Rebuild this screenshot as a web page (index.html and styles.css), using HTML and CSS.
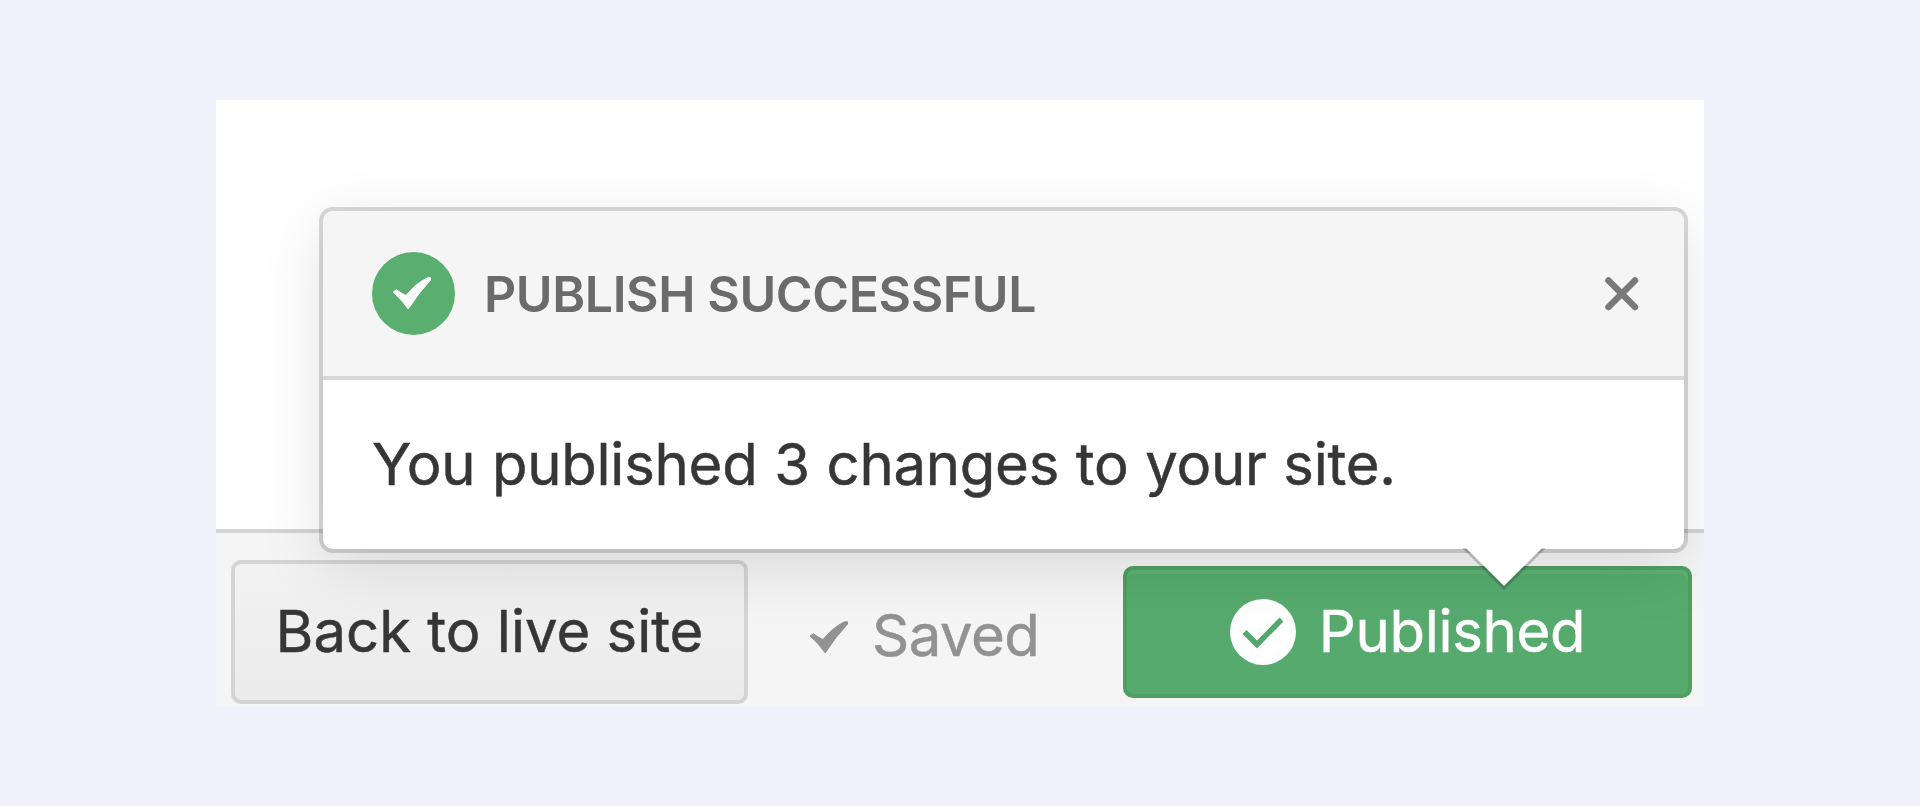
FILE: index.html
```html
<!DOCTYPE html>
<html lang="en">
<head>
    <meta charset="UTF-8">
    <title>Publish successful</title>
    <link rel="stylesheet" href="styles.css">
</head>
<body>
    <div class="panel">
        <div class="canvas"></div>

        <div class="footer">
            <button class="btn btn-back"><span class="back-text">Back to live site</span></button>
            <div class="saved">
                <svg class="saved-icon" viewBox="0 0 38 33">
                    <path d="M0.5 14.5 L3.5 12.8 Q8.5 16.5 13 18.6 Q22 7 34.5 0.8 L37.5 0.8 L37.5 3 Q25 16.5 15.2 32 Q8.5 22 0.5 15.5Z"/>
                </svg>
                <span class="saved-text">Saved</span>
            </div>
            <button class="btn btn-published">
                <svg class="published-icon" viewBox="0 0 66 66">
                    <circle cx="33" cy="33" r="33" fill="#fff"/>
                    <path d="M14.5 33 L27 45.5 L51.5 20.5" fill="none" stroke="#55a86b" stroke-width="5.5"/>
                </svg>
                <span class="published-text">Published</span>
            </button>
        </div>

        <div class="popover">
            <div class="popover-header">
                <svg class="success-icon" viewBox="0 0 83 83">
                    <circle cx="41.5" cy="41.5" r="41.5" fill="#5aae70"/>
                    <path class="success-check" transform="translate(21 25)" d="M0.5 14.5 L3.5 12.8 Q8.5 16.5 13 18.6 Q22 7 34.5 0.8 L37.5 0.8 L37.5 3 Q25 16.5 15.2 32 Q8.5 22 0.5 15.5Z"/>
                </svg>
                <span class="popover-title">PUBLISH SUCCESSFUL</span>
                <svg class="close-icon" viewBox="0 0 34 34">
                    <path d="M3.5 3.5 L30 30 M30 3.5 L3.5 30"/>
                </svg>
            </div>
            <div class="popover-body"><span class="message">You published 3 changes to your site.</span></div>
            <svg class="popover-arrow" viewBox="0 0 84 44">
                <path d="M0 0 L42 42 L84 0Z" fill="#000" fill-opacity="0.2"/>
                <path d="M4 0 L42 38 L80 0Z" fill="#fff"/>
            </svg>
        </div>
    </div>
</body>
</html>
```

FILE: styles.css
```css
body {
    margin: 0;
    padding: 100px 216px 0;
    background: #f0f1fa;
    font-family: 'Inter', sans-serif;
}

.panel {
    position: relative;
    display: flex;
    flex-direction: column;
    height: 606px;
    overflow: hidden;
    background: #fff;
}

.canvas {
    flex: 1;
}

.footer {
    display: flex;
    align-items: flex-start;
    box-sizing: border-box;
    height: 177px;
    padding: 27px 12px 0 15px;
    border-top: 4px solid #d4d4d4;
    background: #f5f5f5;
}

.btn {
    display: flex;
    align-items: center;
    justify-content: center;
    box-sizing: border-box;
    padding: 0 0 2px;
    border-radius: 10px;
    font-family: inherit;
    font-size: 58px;
    line-height: 70px;
    white-space: nowrap;
    -webkit-text-stroke: 0.5px;
}

.btn-back {
    width: 517px;
    height: 144px;
    border: 4px solid #d4d4d4;
    background: linear-gradient(to bottom, #f2f2f2, #ebebeb);
    color: #363636;
}

.saved {
    display: flex;
    align-items: center;
    width: 313px;
    margin: 40px 0 0 62px;
    color: #929292;
    font-size: 58px;
    letter-spacing: -0.5px;
    line-height: 70px;
    -webkit-text-stroke: 0.5px;
}

.saved-icon {
    width: 38px;
    height: 33px;
    margin: 4px 24px 0 0;
    fill: #929292;
    stroke: #929292;
    stroke-linejoin: round;
}

.btn-published {
    width: 569px;
    height: 132px;
    margin-top: 6px;
    border: 4px solid #4f9f64;
    background: #57aa6d;
    box-shadow: inset 0 4px 0 #5db173;
    color: #fff;
    letter-spacing: -0.3px;
}

.published-icon {
    width: 66px;
    height: 66px;
    margin: 2px 23px 0 0;
}

/* sits over the canvas and the footer */
.popover {
    position: absolute;
    top: 111px;
    left: 107px;
    width: 1361px;
    height: 338px;
    border-radius: 10px;
    background: #fff;
    box-shadow: 0 0 0 4px rgba(0, 0, 0, 0.15), 0 16px 66px rgba(0, 0, 0, 0.12);
}

.popover-header {
    display: flex;
    align-items: center;
    box-sizing: border-box;
    height: 169px;
    padding: 0 45px 0 49px;
    border-bottom: 4px solid #d8d8d8;
    border-radius: 10px 10px 0 0;
    background: #f5f5f5;
}

.success-icon {
    width: 83px;
    height: 83px;
    margin-right: 29px;
}

.success-check {
    fill: #fff;
    stroke: #fff;
    stroke-linejoin: round;
}

.popover-title {
    color: #6b6b6b;
    font-size: 50px;
    font-weight: 600;
    letter-spacing: -0.4px;
}

.close-icon {
    width: 34px;
    height: 34px;
    margin-left: auto;
    fill: none;
    stroke: #797979;
    stroke-linecap: round;
    stroke-width: 6.5;
}

.popover-body {
    padding: 49px 49px 0;
    color: #363636;
    font-size: 58px;
    letter-spacing: -0.25px;
    word-spacing: 0.7px;
    line-height: 70px;
    white-space: nowrap;
    -webkit-text-stroke: 0.5px;
}

.popover-arrow {
    position: absolute;
    top: 337px;
    left: 1139px;
    width: 84px;
    height: 44px;
}
```
